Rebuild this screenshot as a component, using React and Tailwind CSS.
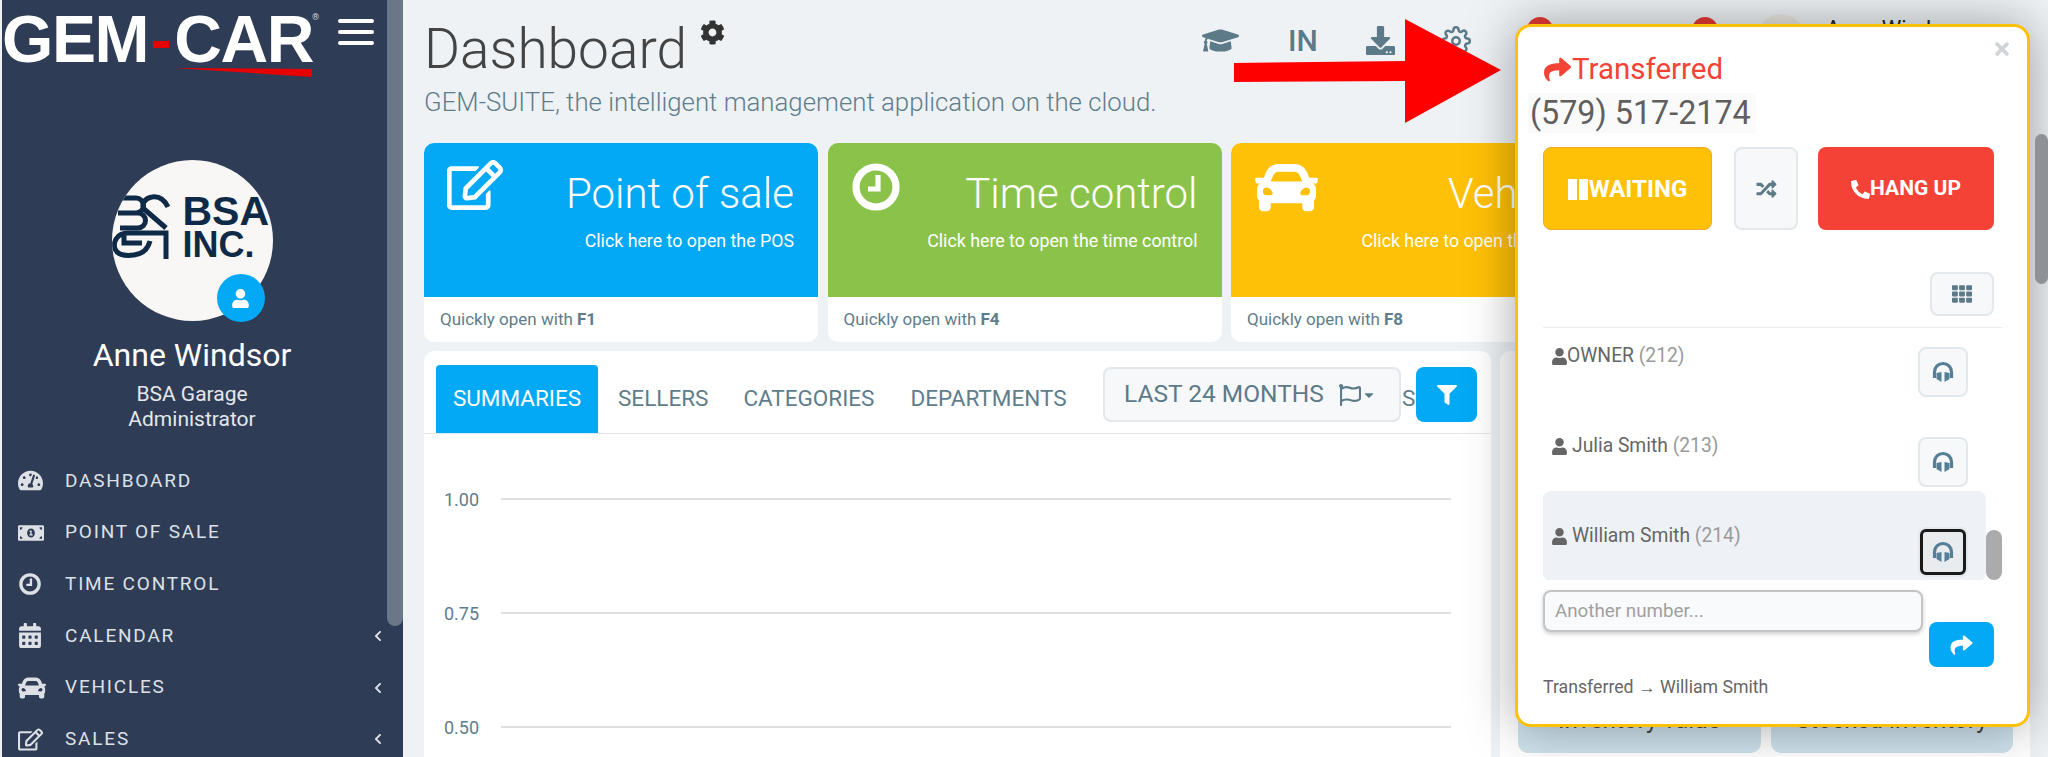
import React from 'react';
import { FaCog, FaGraduationCap, FaDownload, FaRegEdit, FaCar, FaTachometerAlt, FaMoneyBillAlt, FaCalendarAlt, FaChevronLeft, FaUser, FaShare, FaPhone, FaRandom, FaTh, FaFilter, FaRegFlag, FaCaretDown, FaTimes } from 'react-icons/fa';
import { FiSettings } from 'react-icons/fi';

function ClockIcon({ className }) {
  return (
    <svg className={className} viewBox="0 0 24 24" fill="none" stroke="currentColor">
      <circle cx="12" cy="12" r="10" strokeWidth="3.6" />
      <path d="M13 6v7H8" strokeWidth="2.6" />
    </svg>
  );
}

function HeadsetIcon({ className }) {
  return (
    <svg className={className} viewBox="0 0 24 24" fill="currentColor">
      <path d="M3.5 18V12a8.5 8.5 0 0 1 17 0V18" fill="none" stroke="currentColor" strokeWidth="3.2" />
      <path d="M5.5 13L10.5 12V22L5.5 19Z" />
      <path d="M18.5 13L13.500 12V22L18.500 19Z" />
    </svg>
  );
}

const navItems = [
  { label: 'DASHBOARD', icon: FaTachometerAlt, size: 'w-[25px] h-[25px]' },
  { label: 'POINT OF SALE', icon: FaMoneyBillAlt, size: 'w-[26px] h-[26px]' },
  { label: 'TIME CONTROL', icon: ClockIcon, size: 'ml-[1px] w-[22px] h-[22px]' },
  { label: 'CALENDAR', icon: FaCalendarAlt, size: 'w-[24px] h-[25px]', more: true },
  { label: 'VEHICLES', icon: FaCar, size: 'w-[28px] h-[28px]', more: true },
  { label: 'SALES', icon: FaRegEdit, size: 'w-[25px] h-[23px]', more: true },
];

const cards = [
  { title: 'Point of sale', sub: 'Click here to open the POS', key: 'F1', color: 'bg-[#03a9f4]', icon: FaRegEdit, iconPos: 'left-[23px] top-[17px] w-[56px] h-[50px]' },
  { title: 'Time control', sub: 'Click here to open the time control', key: 'F4', color: 'bg-[#8bc34a]', icon: ClockIcon, iconPos: 'left-[24px] top-[20px] w-[48px] h-[48px]' },
  { title: 'Vehicles', sub: 'Click here to open the vehicles', key: 'F8', color: 'bg-[#ffc107]', icon: FaCar, iconPos: 'left-[24px] top-[13px] w-[63px] h-[63px]' },
];

const contacts = [
  { name: 'OWNER', ext: '(212)', tight: true },
  { name: 'Julia Smith', ext: '(213)' },
  { name: 'William Smith', ext: '(214)', active: true },
];

function Sidebar() {
  return (
    <aside className="relative ml-[2px] w-[401px] h-full shrink-0 bg-[#2f3c55] overflow-hidden">
      <div className="absolute right-0 top-0 w-[16px] h-[626px] bg-[#6b7688] rounded-b-lg" />
      <div className="flex items-start h-[82px]">
        <div className="relative w-[312px] h-[82px]">
          <div className="absolute left-0 top-[3px] text-[66px] leading-[72px] font-bold text-white font-['Liberation_Sans',sans-serif] tracking-[-1.4px] whitespace-nowrap">
            GEM<span className="inline-block align-middle mx-[5px] w-[16px] h-[7px] bg-[#e60000]" />CAR
          </div>
          <div className="absolute left-[310px] top-[12px] text-[9px] leading-[10px] text-[#cfd3da]">®</div>
          <svg className="absolute left-[172px] top-[67px]" width="140" height="12" viewBox="0 0 140 12">
            <path d="M0 1 L138 2 L138 10 Z" fill="#e60000" />
          </svg>
        </div>
        <div className="ml-[24px] mt-[19px] flex flex-col gap-[7px]">
          <div className="w-[36px] h-[4px] bg-white rounded-sm" />
          <div className="w-[36px] h-[4px] bg-white rounded-sm" />
          <div className="w-[36px] h-[4px] bg-white rounded-sm" />
        </div>
      </div>
      <div className="flex flex-col items-center pr-[21px] pt-[78px]">
        <div className="relative w-[161px] h-[161px]">
          <div className="absolute inset-0 rounded-full bg-[#f9f7f5] overflow-hidden">
            <div className="absolute left-[71px] top-[31px] text-[#0f2a47] font-bold font-['Liberation_Sans',sans-serif] whitespace-nowrap">
              <div className="text-[41px] leading-[40px]">BSA</div>
              <div className="text-[36px] leading-[28px]">INC.</div>
            </div>
            <svg className="absolute left-0 top-[33px]" width="58" height="66" viewBox="0 0 58 66" fill="none" stroke="#0f2a47" strokeWidth="5">
              <path d="M6 5H24a7.500 7.500 0 0 1 0 15H6M6 20H26a7.500 7.500 0 0 1 0 15H8" />
              <path d="M56 14C52 6 46 3 40 4C33 5 29 11 32 16L54 35" />
              <path d="M54 66V40H16C4 40 1 50 3 56C6 63 14 63 22 62C30 61 36 56 38 48M12 40V50H30" />
            </svg>
          </div>
          <div className="absolute left-[105px] top-[114px] w-[48px] h-[48px] rounded-full bg-[#03a9f4] flex items-center justify-center text-white">
            <FaUser className="w-[17px] h-[19px]" />
          </div>
        </div>
        <div className="mt-[15px] text-[32px] leading-[38px] text-white">Anne Windsor</div>
        <div className="mt-[8px] text-[21px] leading-[25px] text-[#e4e7ec] text-center">BSA Garage<br />Administrator</div>
      </div>
      <nav className="mt-[23px] flex flex-col">
        {navItems.map(item => (
          <div key={item.label} className="flex items-center h-[51.7px] pl-[16px] pr-[21px] text-[#dde1e6]">
            <span className="w-[47px] shrink-0 flex"><item.icon className={item.size} /></span>
            <span className="flex-1 text-[19px] tracking-[1.8px]">{item.label}</span>
            {item.more && <FaChevronLeft className="w-[8px] h-[12px]" />}
          </div>
        ))}
      </nav>
    </aside>
  );
}

function ActionCard({ card }) {
  const Icon = card.icon;
  return (
    <div className="w-[394px] shrink-0 h-[199px] rounded-[10px] bg-white overflow-hidden flex flex-col">
      <div className={`relative h-[154px] ${card.color} text-white text-right pr-[24px] pt-[25px]`}>
        <Icon className={`absolute ${card.iconPos}`} />
        <div className="text-[42px] leading-[52px] font-light whitespace-nowrap">{card.title}</div>
        <div className="mt-[8.5px] text-[17.8px] leading-[24px] whitespace-nowrap">{card.sub}</div>
      </div>
      <div className="flex-1 flex items-center pl-[16px] pt-[1px] text-[17px] text-[#607d8b]">
        Quickly open with&nbsp;<b className="font-bold">{card.key}</b>
      </div>
    </div>
  );
}

function ChartPanel() {
  const ticks = ['1.00', '0.75', '0.50'];
  return (
    <div className="flex-1 rounded-t-[10px] bg-white">
      <div className="relative flex items-end h-[83px] pl-[12px] border-b border-[#e3e8ec] text-[22.5px] text-[#607d8b]">
        <div className="w-[162px] h-[68px] bg-[#03a9f4] text-white flex items-center justify-center rounded-t">SUMMARIES</div>
        <div className="h-[68px] flex items-center ml-[20px]">SELLERS</div>
        <div className="h-[68px] flex items-center ml-[35px]">CATEGORIES</div>
        <div className="h-[68px] flex items-center ml-[36px]">DEPARTMENTS</div>
        <div className="absolute left-[978px] bottom-0 h-[68px] flex items-center">S</div>
        <div className="absolute left-[679px] top-[16px] w-[298px] h-[55px] rounded-lg border-2 border-[#e3e8ec] bg-[#f6f8fa] flex items-center pl-[19px] text-[24.5px] text-[#5d7a88]">
          LAST 24 MONTHS
          <FaRegFlag className="ml-[15px] w-[22px] h-[22px]" />
          <FaCaretDown className="ml-[2px] w-[12px] h-[14px]" />
        </div>
        <div className="absolute left-[992px] top-[16px] w-[61px] h-[55px] rounded-lg bg-[#03a9f4] flex items-center justify-center text-white">
          <FaFilter className="w-[20px] h-[20px]" />
        </div>
      </div>
      <div className="pt-[55px] pl-[20px] pr-[40px] flex flex-col gap-[94px] text-[18px] text-[#607d8b]">
        {ticks.map(t => (
          <div key={t} className="flex items-center h-[20px]">
            <span className="w-[57px] shrink-0">{t}</span>
            <div className="flex-1 h-[2px] bg-[#dedede]" />
          </div>
        ))}
      </div>
    </div>
  );
}

function RightPanel() {
  return (
    <div className="flex-1 h-full pt-[351px] pl-[1px] pr-[18px]">
      <div className="h-full rounded-t-[10px] bg-white flex flex-col justify-end pb-[4px] pl-[18px] pr-[17px]">
        <div className="flex gap-[10px]">
          {['Inventory value', 'Stocked inventory'].map(t => (
            <div key={t} className="flex-1 h-[90px] pt-[42px] rounded-[10px] bg-[#cfe3ee] text-center text-[24.3px] leading-[30px] text-[#444]">{t}</div>
          ))}
        </div>
      </div>
    </div>
  );
}

function CallPopup() {
  return (
    <div className="absolute left-[1515px] top-[24px] w-[515px] h-[703px] rounded-[16px] border-[3px] border-[#ffc107] bg-white shadow-[0_0_50px_rgba(0,0,0,0.35)] pl-[25px] pt-[24px]">
      <FaTimes className="absolute right-[15px] top-[12px] w-[20px] h-[20px] text-[#cfd4d8]" />
      <div className="flex items-center text-[29.5px] leading-[36px] text-[#f44336]">
        <FaShare className="w-[29px] h-[27px]" />Transferred
      </div>
      <div className="-ml-[15px] mt-[6px] w-[228px] pl-[2px] bg-[#fafafa] text-[32.3px] leading-[40px] text-[#5f5f5f] whitespace-nowrap">(579) 517-2174</div>
      <div className="flex items-stretch mt-[14px] h-[83px] w-[451px]">
        <div className="w-[169px] pt-[1px] rounded-lg bg-[#ffc107] border border-[#f0a92e] flex items-center justify-center text-white text-[24px] font-bold">
          <span className="flex gap-[2px] mr-[1px]">
            <span className="w-[9px] h-[21px] bg-white" />
            <span className="w-[9px] h-[21px] bg-white" />
          </span>
          WAITING
        </div>
        <div className="ml-[22px] w-[64px] rounded-lg bg-[#f6f8fa] border-2 border-[#e3e8ec] flex items-center justify-center text-[#5d7a88]">
          <FaRandom className="w-[23px] h-[20px]" />
        </div>
        <div className="ml-[20px] w-[176px] pt-[1px] rounded-lg bg-[#f44336] flex items-center justify-center text-white text-[21px] font-bold">
          <FaPhone className="w-[19px] h-[19px] rotate-90" />HANG UP
        </div>
      </div>
      <div className="flex justify-end mt-[42px] w-[451px]">
        <div className="w-[64px] h-[44px] rounded-lg bg-[#f6f8fa] border-2 border-[#e3e8ec] flex items-center justify-center text-[#5d7a88]">
          <FaTh className="w-[24px] h-[20px]" />
        </div>
      </div>
      <div className="relative mt-[11px] w-[459px] h-[253px] border-t border-[#e9edf0] overflow-hidden">
        <div className="flex flex-col w-[443px] -mt-[17px]">
          {contacts.map(c => (
            <div key={c.name} className={`relative h-[90px] shrink-0 rounded-lg pl-[9px] pt-[33px] text-[19.3px] leading-[24px] ${c.active ? 'bg-[#eef2f6]' : ''}`}>
              <div className="flex items-center text-[#666]">
                <FaUser className={`w-[15px] h-[17px] ${c.tight ? '' : 'mr-[5px]'}`} />
                {c.name}&nbsp;<span className="text-[#9a9a9a]">{c.ext}</span>
              </div>
              <div className={`absolute left-[375px] top-[36px] w-[50px] h-[50px] rounded-lg border-2 border-[#e3e8ec] flex items-center justify-center text-[#557f96] ${c.active ? 'bg-[#e9ecef] outline-[3px] outline-[#1a1a1a] -outline-offset-[5px]' : 'bg-[#f6f8fa]'}`}>
                <HeadsetIcon className="w-[24px] h-[24px]" />
              </div>
            </div>
          ))}
        </div>
        <div className="absolute right-0 bottom-0 w-[16px] h-[50px] rounded-lg bg-[#ababab]" />
      </div>
      <div className="flex items-start mt-[10px] w-[451px] justify-between">
        <div className="w-[380px] h-[42px] rounded-lg border-2 border-[#c4c4c4] bg-[#f9fafb] shadow-[0_2px_4px_rgba(0,0,0,0.2)] pl-[10px] flex items-center text-[18.8px] text-[#a0a0a0]">Another number...</div>
        <div className="mt-[32px] w-[65px] h-[45px] rounded-lg bg-[#03a9f4] flex items-center justify-center text-white">
          <FaShare className="w-[23px] h-[22px]" />
        </div>
      </div>
      <div className="mt-[9px] text-[17.7px] leading-[22px] text-[#666]">Transferred → William Smith</div>
    </div>
  );
}

function RedArrow() {
  return (
    <svg className="absolute left-[1234px] top-[19px]" width="268" height="105" viewBox="0 0 268 105">
      <path d="M0 44 L171 42 L171 0 L267 51 L171 104 L171 62 L0 63 Z" fill="#ff0000" />
    </svg>
  );
}

function TopBar() {
  return (
    <>
      <div className="absolute left-[1202px] top-[22px] flex items-center text-[#5d7a88]">
        <FaGraduationCap className="w-[37px] h-[37px]" />
        <span className="ml-[49px] text-[30px] leading-[37px] font-medium">IN</span>
        <FaDownload className="ml-[48px] w-[29px] h-[29px]" />
        <FiSettings className="ml-[46px] w-[30px] h-[30px]" />
      </div>
      <div className="absolute left-[1527px] top-[17px] w-[26px] h-[26px] rounded-full bg-[#e53935]" />
      <div className="absolute left-[1692px] top-[17px] w-[26px] h-[26px] rounded-full bg-[#e53935]" />
      <div className="absolute left-[1758px] top-[14px] w-[46px] h-[46px] rounded-full bg-[#e9e6e0]" />
      <div className="absolute left-[1826px] top-[15px] text-[22px] leading-[28px] text-[#222] whitespace-nowrap">Anne Windsor</div>
    </>
  );
}

export default function App() {
  return (
    <div className="relative flex w-[2048px] h-[757px] overflow-hidden bg-[#eef2f5] font-['Roboto','Liberation_Sans',sans-serif]">
      <Sidebar />
      <main className="w-[1096px] shrink-0 h-full flex flex-col pl-[21px] pr-[8px]">
        <h1 className="mt-[15px] text-[55px] leading-[68px] font-light text-[#444] flex items-start">
          Dashboard <FaCog className="ml-[13px] mt-[5px] w-[25px] h-[25px] text-[#333]" />
        </h1>
        <p className="mt-[4px] text-[25.8px] leading-[30px] font-light text-[#607d8b] whitespace-nowrap">GEM-SUITE, the intelligent management application on the cloud.</p>
        <div className="flex gap-[9.5px] mt-[26px] w-[1300px]">
          {cards.map(c => <ActionCard key={c.key} card={c} />)}
        </div>
        <div className="mt-[9px] flex-1 flex min-h-0"><ChartPanel /></div>
      </main>
      <RightPanel />
      <TopBar />
      <RedArrow />
      <CallPopup />
      <div className="absolute right-0 top-[134px] w-[13px] h-[150px] rounded-lg bg-[#8e9296]" />
    </div>
  );
}
